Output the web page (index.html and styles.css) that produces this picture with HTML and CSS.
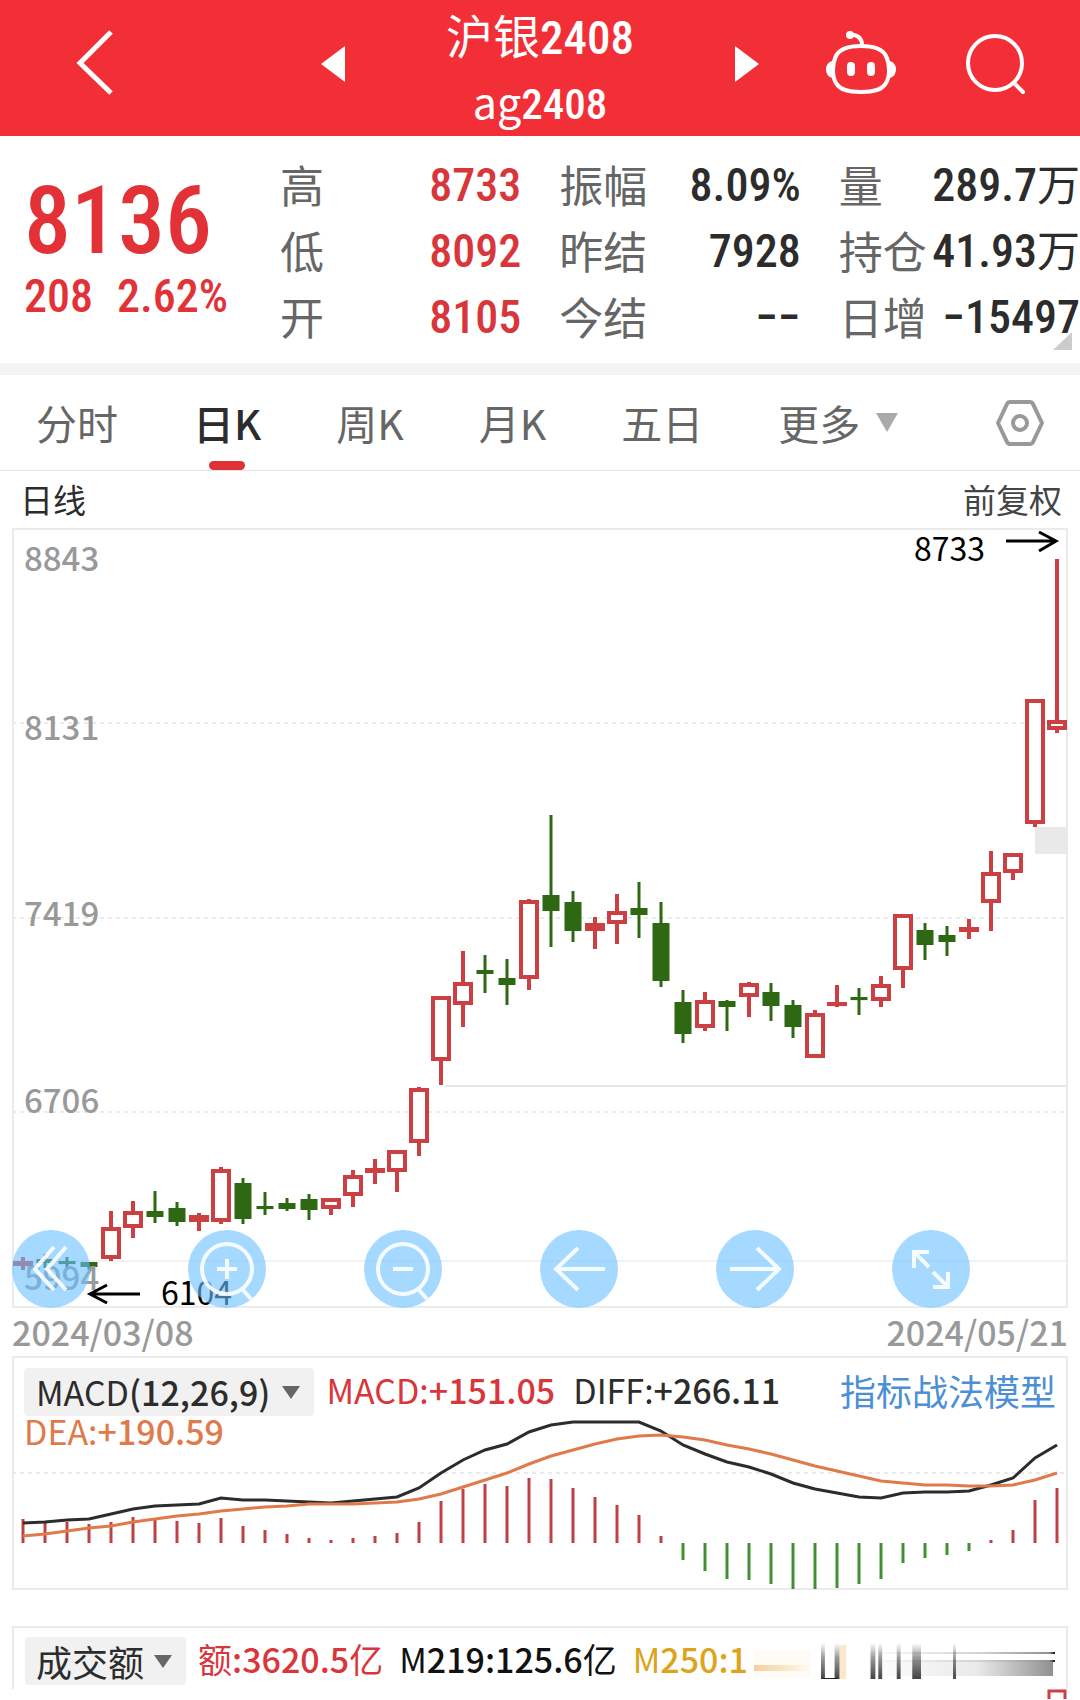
FILE: index.html
```html
<!DOCTYPE html>
<html lang="zh-CN">
<head>
<meta charset="utf-8">
<meta name="viewport" content="width=device-width, initial-scale=1">
<title>沪银2408</title>
<link rel="stylesheet" href="styles.css">
</head>
<body>
<header class="topbar">
  <div class="topbar-side">
    <button class="icon-button" type="button" aria-label="返回">
      <svg width="40" height="68" viewBox="0 0 40 68"><path d="M35 4 4 35 35 65" fill="none" stroke="#fff" stroke-width="5"/></svg>
    </button>
  </div>
  <div class="contract">
    <button class="icon-button" type="button" aria-label="上一个">
      <svg width="24" height="36" viewBox="0 0 24 36"><path d="M24 0V36L0 18Z" fill="#fff"/></svg>
    </button>
    <h1 class="contract-name"><span class="contract-title">沪银<span class="num">2408</span></span><span class="contract-code">ag<span class="num">2408</span></span></h1>
    <button class="icon-button" type="button" aria-label="下一个">
      <svg width="24" height="36" viewBox="0 0 24 36"><path d="M0 0V36L24 18Z" fill="#fff"/></svg>
    </button>
  </div>
  <div class="topbar-side topbar-tools">
    <button class="icon-button" type="button" aria-label="智能助手">
      <svg width="70" height="66" viewBox="0 0 70 66" fill="none" stroke="#fff" stroke-width="4" stroke-linecap="round">
        <path d="M35 16C47 16 56 18 60 26 64 34 64 46 60 53 56 60 48 62 35 62 22 62 14 60 10 53 6 46 6 34 10 26 14 18 23 16 35 16Z"/>
        <path d="M36 15C36 8 31 5 25 4.500"/>
        <circle cx="24" cy="5" r="4" fill="#fff" stroke="none"/>
        <path d="M6 31Q0 33 0 39.500T6 48ZM64 31Q70 33 70 39.500T64 48Z" fill="#fff" stroke="none"/>
        <path d="M25 36V42M45 36V42" stroke-width="8"/>
      </svg>
    </button>
    <button class="icon-button" type="button" aria-label="搜索">
      <svg width="62" height="62" viewBox="0 0 62 62" fill="none" stroke="#fff" stroke-width="4" stroke-linecap="round"><circle cx="30" cy="31" r="27"/><path d="M49 51 58 60"/></svg>
    </button>
  </div>
</header>

<main>
<section class="quote" aria-label="报价">
  <div class="price">
    <strong class="price-last num">8136</strong>
    <p class="price-change num"><span>208</span><span>2.62%</span></p>
  </div>
  <dl class="stats">
    <div class="stat"><dt>高</dt><dd class="num up">8733</dd></div>
    <div class="stat"><dt>振幅</dt><dd class="num">8.09%</dd></div>
    <div class="stat"><dt>量</dt><dd class="num">289.7<span class="unit">万</span></dd></div>
    <div class="stat"><dt>低</dt><dd class="num up">8092</dd></div>
    <div class="stat"><dt>昨结</dt><dd class="num">7928</dd></div>
    <div class="stat"><dt>持仓</dt><dd class="num">41.93<span class="unit">万</span></dd></div>
    <div class="stat"><dt>开</dt><dd class="num up">8105</dd></div>
    <div class="stat"><dt>今结</dt><dd class="num">−−</dd></div>
    <div class="stat"><dt>日增</dt><dd class="num">−15497</dd></div>
  </dl>
  <svg class="quote-more" width="19" height="18" viewBox="0 0 19 18"><path d="M19 0V18H0Z" fill="#ccc"/></svg>
</section>

<nav class="tabs" aria-label="周期">
  <button class="tab" type="button">分时</button>
  <button class="tab tab-active" type="button" aria-current="true">日K</button>
  <button class="tab" type="button">周K</button>
  <button class="tab" type="button">月K</button>
  <button class="tab" type="button">五日</button>
  <button class="tab tab-menu" type="button" aria-haspopup="true">更多<svg width="22" height="19" viewBox="0 0 22 19"><path d="M0 0H22L11 19Z" fill="#aaa"/></svg></button>
  <button class="icon-button tabs-settings" type="button" aria-label="设置">
    <svg width="48" height="46" viewBox="0 0 48 46" fill="none" stroke="#999" stroke-width="4" stroke-linejoin="round"><path d="M14 2H34Q36 2 37 4L46 23 37 42Q36 44 34 44H14Q12 44 11 42L2 23 11 4Q12 2 14 2Z"/><circle cx="24" cy="23" r="7"/></svg>
  </button>
</nav>

<section class="kline" aria-label="日线图">
  <div class="kline-head"><h2 class="kline-title">日线</h2><button class="adjust" type="button">前复权</button></div>
  <div class="chart">
    <svg class="plot" id="kline-plot" viewBox="0 528 1080 780">
      <rect class="frame" x="13" y="529" width="1054" height="778"/>
      <path class="grid" d="M12 723H1066M12 918H1066M12 1112H1066"/>
      <path class="level" d="M445 1086H1066"/>
      <path class="level level-thin" d="M14 1261H1066"/>
      <rect x="1035" y="827" width="32" height="27" fill="#e9e9e9"/>
      <g id="candles"></g>
      <g class="axis">
        <text x="24" y="571">8843</text><text x="24" y="740">8131</text><text x="24" y="926">7419</text><text x="24" y="1113">6706</text><text x="24" y="1290">5994</text>
      </g>
      <g class="marks">
        <text x="914" y="561">8733</text><text x="161" y="1305">6104</text>
        <path d="M1006 541H1056M1039 532 1056 541 1039 551M140 1294H90M107 1285 90 1294 107 1303"/>
      </g>
    </svg>
    <div class="chart-tools">
      <button class="tool" type="button" aria-label="最早"><svg viewBox="0 0 78 78"><path d="M42 17 23 39 42 60M54 17 35 39 54 60"/></svg></button>
      <button class="tool" type="button" aria-label="放大"><svg viewBox="0 0 78 78"><circle cx="39" cy="39" r="25"/><path d="M29 39H49M39 29V49M55 60 63 69"/></svg></button>
      <button class="tool" type="button" aria-label="缩小"><svg viewBox="0 0 78 78"><circle cx="39" cy="39" r="25"/><path d="M29 39H49M55 60 63 69"/></svg></button>
      <button class="tool" type="button" aria-label="左移"><svg viewBox="0 0 78 78"><path d="M65 39H16M38 18 16 39 38 60"/></svg></button>
      <button class="tool" type="button" aria-label="右移"><svg viewBox="0 0 78 78"><path d="M14 39H63M41 18 63 39 41 60"/></svg></button>
      <button class="tool" type="button" aria-label="全屏"><svg viewBox="0 0 78 78"><path d="M37 37 22 22M22 38V22H37M41 42 56 57M56 42V57H41"/></svg></button>
    </div>
  </div>
  <div class="dates"><time datetime="2024-03-08">2024/03/08</time><time datetime="2024-05-21">2024/05/21</time></div>
</section>

<section class="chart" aria-label="MACD">
  <svg class="plot" id="macd-plot" viewBox="0 1356 1080 234">
    <rect class="frame" x="13" y="1357" width="1054" height="232"/>
    <path class="grid" d="M12 1473H1066"/>
    <g id="macd-lines"></g>
  </svg>
  <div class="legend legend-over">
    <div class="legend-row">
      <button class="chip" type="button" aria-haspopup="true"><span>MACD<b>(12,26,9)</b></span><svg width="18" height="13" viewBox="0 0 18 13"><path d="M0 0H18L9 13Z" fill="#666"/></svg></button>
      <span class="legend-value up">MACD:<b>+151.05</b></span>
      <span class="legend-value">DIFF:<b>+266.11</b></span>
      <a class="legend-link" href="#model">指标战法模型</a>
    </div>
    <div class="legend-second dea">DEA:<b>+190.59</b></div>
  </div>
</section>

<section class="volume" aria-label="成交额">
  <div class="legend">
    <div class="legend-row">
      <button class="chip chip-cjk" type="button" aria-haspopup="true"><span>成交额</span><svg width="18" height="13" viewBox="0 0 18 13"><path d="M0 0H18L9 13Z" fill="#666"/></svg></button>
      <span class="legend-value up">额<b>:3620.5</b>亿</span>
      <span class="legend-value ink">M<b>219:125.6</b>亿</span>
      <span class="legend-value gold">M<b>250:1</b></span>
      <svg class="smear" viewBox="0 0 310 40" preserveAspectRatio="none" aria-hidden="true">
        <defs>
          <linearGradient id="fade-down" x1="0" y1="0" x2="0" y2="1"><stop offset="0" stop-color="#222" stop-opacity="0"/><stop offset=".4" stop-color="#222" stop-opacity=".45"/><stop offset="1" stop-color="#222" stop-opacity=".85"/></linearGradient>
          <linearGradient id="fade-right"><stop offset="0" stop-color="#222" stop-opacity="0"/><stop offset=".6" stop-color="#222" stop-opacity=".1"/><stop offset="1" stop-color="#222" stop-opacity=".5"/></linearGradient>
          <linearGradient id="fade-line"><stop offset="0" stop-color="#222" stop-opacity="0"/><stop offset=".6" stop-color="#222" stop-opacity=".2"/><stop offset=".97" stop-color="#222" stop-opacity=".5"/><stop offset="1" stop-color="#111"/></linearGradient>
          <linearGradient id="fade-gold"><stop offset="0" stop-color="#f0a050" stop-opacity=".5"/><stop offset="1" stop-color="#e5a72b" stop-opacity="0"/></linearGradient>
        </defs>
        <rect x="0" y="24" width="58" height="6" fill="url(#fade-gold)"/>
        <rect x="0" y="10" width="58" height="26" fill="#e5a72b" opacity=".05"/>
        <rect x="88" y="4" width="7" height="34" fill="#e5a72b" opacity=".25"/>
        <path d="M69 2H73V38H69ZM83 2H88V38H83ZM120 2H125V38H120ZM128 2H132V38H128ZM147 2H151V38H147ZM163 2H172V38H163ZM205 2H208V38H205Z" fill="url(#fade-down)"/>
        <path d="M70 37H87V38H70Z" fill="#222"/>
        <rect x="115" y="11" width="195" height="2" fill="url(#fade-line)"/>
        <rect x="115" y="19" width="195" height="2" fill="url(#fade-line)"/>
        <rect x="115" y="21" width="193" height="14" fill="url(#fade-right)"/>
      </svg>
    </div>
  </div>
  <svg class="volume-plot" viewBox="0 0 1080 10"><path d="M1049 12V2H1065V12" fill="none" stroke="#cc3f43" stroke-width="3"/></svg>
</section>
</main>
<script src="chart.js"></script>
</body>
</html>
```
FILE: styles.css
```css
* { box-sizing: border-box; }

body {
  margin: 0;
  overflow-x: hidden;
  background: #fff;
  color: #2c2c2c;
  font-family: "Noto Sans CJK SC", sans-serif;
}

h1, h2, p, dl, dd { margin: 0; font-weight: 400; }
button { border: 0; padding: 0; background: none; color: inherit; font: inherit; }
b { font-weight: 500; }
svg { display: block; flex: none; }

.num { font-family: "Roboto Condensed", Roboto, "Noto Sans CJK SC", sans-serif; font-weight: 500; }
.up { color: #d8363a; }

/* top bar */
.topbar {
  display: grid;
  grid-template-columns: 1fr 438px 1fr;
  align-items: center;
  height: 136px;
  background: #f22f37;
  color: #fff;
}
.topbar-side { display: flex; align-items: center; padding-left: 76px; padding-bottom: 12px; }
.topbar-tools { justify-content: flex-end; gap: 69px; padding: 0 53px 10px 0; }
.contract { display: flex; align-items: center; justify-content: space-between; }
.contract .icon-button { padding-bottom: 8px; }
.contract-name { display: flex; flex-direction: column; align-items: center; padding-bottom: 2px; }
.contract-title { font-size: 47px; line-height: 66px; }
.contract-code { font-size: 43px; line-height: 58px; }

/* quote */
.quote {
  position: relative;
  display: grid;
  grid-template-columns: 256px 1fr;
  padding: 16px 0 13px 24px;
}
.price { padding-top: 22px; color: #e23237; }
.price-last { display: block; font-size: 94px; line-height: 94px; }
.price-change { display: flex; gap: 24px; font-size: 46px; line-height: 56px; }
.stats { display: grid; grid-template-columns: repeat(3, 1fr); column-gap: 38px; }
.stat { display: flex; justify-content: space-between; height: 66px; line-height: 64px; white-space: nowrap; }
.stat dt { color: #666; font-size: 44px; }
.stat dd { font-size: 46px; line-height: 66px; }
.unit { font-family: "Noto Sans CJK SC", sans-serif; font-size: 43px; font-weight: 400; line-height: 1; }
.quote-more { position: absolute; right: 8px; bottom: 13px; }

/* period tabs */
.tabs {
  display: flex;
  align-items: center;
  gap: 75px;
  height: 108px;
  padding: 0 36px;
  border-top: 12px solid #f4f4f4;
  border-bottom: 1px solid #e4e4e4;
  color: #666;
  font-size: 41px;
}
.tab { position: relative; height: 95px; line-height: 93px; white-space: nowrap; }
.tab-active { color: #2c2c2c; font-weight: 500; }
.tab-active::after {
  content: "";
  position: absolute;
  left: calc(50% - 18px);
  bottom: 0;
  width: 36px;
  height: 9px;
  border-radius: 5px;
  background: #e03236;
}
.tab-menu { display: flex; align-items: center; gap: 16px; }
.tabs-settings { margin-left: auto; }

/* charts */
.kline-head { display: flex; justify-content: space-between; padding: 0 18px 0 20px; font-size: 33px; line-height: 57px; }
.kline-title { font-size: 33px; }
.adjust { color: #444; }
.chart { position: relative; }
.plot { width: 100%; height: auto; }
.frame { fill: none; stroke: #ebebeb; stroke-width: 2; }
.grid { stroke: #eaeaea; stroke-width: 2; stroke-dasharray: 4 4; }
.level { stroke: #e6e6e6; stroke-width: 2; }
.level-thin { stroke-width: 1; }
.axis { fill: #999; font-size: 33px; font-weight: 500; }
.marks { fill: #000; font-size: 32px; }
.marks path { fill: none; stroke: #000; stroke-width: 3; }
.candle-up { fill: #fff; stroke: #cc3f43; stroke-width: 4; }
.candle-down { fill: #2f6812; stroke: #2f6812; stroke-width: 3; }
.bar-up { stroke: #bd4144; stroke-width: 3; }
.bar-down { stroke: #439033; stroke-width: 3; }
.diff-line { fill: none; stroke: #2c2c2c; stroke-width: 3; }
.dea-line { fill: none; stroke: #e07a4a; stroke-width: 3; }

.chart-tools {
  position: absolute;
  right: 110px;
  bottom: 0;
  left: 12px;
  display: flex;
  justify-content: space-between;
}
.tool { width: 78px; height: 78px; border-radius: 50%; background: rgba(105, 192, 255, 0.6); }
.tool svg { fill: none; stroke: #fff; stroke-width: 4; opacity: 0.9; }
.dates { display: flex; justify-content: space-between; padding: 0 12px; color: #999; font-size: 34px; font-weight: 500; line-height: 48px; }

/* indicator legends */
.legend { padding: 11px 12px 0; font-size: 34px; }
.legend-over { position: absolute; top: 1px; right: 12px; left: 12px; }
.legend-row { display: flex; align-items: center; gap: 18px; height: 48px; white-space: nowrap; line-height: 40px; }
.legend-value { height: 44px; }
.chip { display: flex; align-items: center; gap: 12px; height: 48px; padding: 0 14px 0 12px; border-radius: 4px; background: #f1f1f1; line-height: 44px; }
.chip-cjk { gap: 10px; padding: 0 14px 0 11px; font-size: 36px; }
.chip + .legend-value { margin-left: -6px; }
.legend-link { height: 44px; margin-left: auto; color: #4d8fd6; font-size: 36px; text-decoration: none; }
.legend-second { line-height: 30px; }
.dea { color: #e07a4a; }
.ink { color: #111; }
.gold { color: #dca41c; }
.volume { height: 74px; margin-top: 36px; overflow: hidden; }
.volume .legend { margin: 0 12px; border: 2px solid #ebebeb; border-bottom: 0; padding: 9px 11px 4px; }
.volume .legend-value + .legend-value { margin-left: -2px; }
.smear { flex: 1; min-width: 0; height: 40px; margin-left: -12px; }
.volume-plot { width: 100%; }
```
FILE: chart.js
```js
const SVG = "http://www.w3.org/2000/svg";
const x = (i) => 23 + 22 * i;

function add(parent, name, attrs) {
  const node = document.createElementNS(SVG, name);
  for (const key in attrs) node.setAttribute(key, attrs[key]);
  parent.appendChild(node);
}

// direction, high, low, body top, body bottom
const candles = [
  ["up", 1257, 1270, 1261, 1266], ["down", 1254, 1268, 1259, 1263], ["down", 1257, 1269, 1261, 1264],
  ["down", 1262, 1270, 1262, 1267], ["up", 1211, 1261, 1227, 1259], ["up", 1201, 1238, 1211, 1228],
  ["down", 1191, 1223, 1211, 1217], ["down", 1202, 1226, 1208, 1222], ["up", 1213, 1231, 1215, 1222],
  ["up", 1167, 1224, 1169, 1222], ["down", 1178, 1224, 1183, 1219], ["down", 1192, 1215, 1206, 1209],
  ["down", 1198, 1211, 1203, 1209], ["down", 1194, 1220, 1199, 1210], ["up", 1198, 1215, 1198, 1209],
  ["up", 1170, 1207, 1175, 1196], ["up", 1159, 1184, 1168, 1173], ["up", 1150, 1192, 1150, 1172],
  ["up", 1087, 1156, 1088, 1143], ["up", 996, 1085, 996, 1061], ["up", 951, 1027, 982, 1005],
  ["down", 955, 993, 970, 974], ["down", 959, 1005, 978, 985], ["up", 899, 990, 900, 979],
  ["down", 815, 947, 895, 911], ["down", 891, 942, 902, 931], ["up", 917, 949, 923, 931],
  ["up", 894, 944, 911, 924], ["down", 882, 938, 908, 915], ["down", 902, 987, 923, 981],
  ["down", 990, 1043, 1002, 1034], ["up", 992, 1031, 1000, 1028], ["down", 1000, 1031, 1001, 1007],
  ["up", 982, 1017, 983, 997], ["down", 983, 1021, 992, 1006], ["down", 1000, 1038, 1005, 1027],
  ["up", 1010, 1058, 1013, 1058], ["up", 985, 1007, 1002, 1006], ["down", 988, 1015, 997, 1000],
  ["up", 976, 1007, 984, 1001], ["up", 914, 988, 914, 970], ["down", 923, 960, 930, 945],
  ["down", 926, 956, 935, 942], ["up", 919, 939, 927, 932], ["up", 851, 931, 872, 903],
  ["up", 853, 880, 853, 873], ["up", 699, 827, 699, 824], ["up", 559, 733, 720, 730]
];

const candleLayer = document.getElementById("candles");
candles.forEach(([dir, high, low, top, bottom], i) => {
  const stroke = dir === "up" ? 4 : 3;
  const half = dir === "up" ? 8 : 7;
  add(candleLayer, "path", { class: "candle-" + dir, d: `M${x(i)} ${high}V${low}` });
  add(candleLayer, "rect", {
    class: "candle-" + dir, x: x(i) - half, y: top + stroke / 2,
    width: half * 2, height: Math.max(bottom - top - stroke, 0.1)
  });
});

const zero = 1543;
const bars = [1519, 1521, 1522, 1524, 1522, 1517, 1520, 1521, 1523, 1518, 1526, 1530, 1534, 1538, 1540, 1538,
  1536, 1533, 1522, 1501, 1489, 1484, 1486, 1478, 1479, 1488, 1497, 1505, 1515, 1536, 1560, 1571, 1579, 1580,
  1584, 1589, 1589, 1588, 1584, 1579, 1563, 1558, 1555, 1551, 1540, 1530, 1500, 1488];
const diff = [1523, 1522, 1520, 1519, 1514, 1509, 1506, 1505, 1504, 1498, 1500, 1500, 1501, 1502, 1503, 1501,
  1499, 1497, 1488, 1473, 1460, 1450, 1444, 1432, 1425, 1422, 1422, 1422, 1422, 1431, 1445, 1454, 1462, 1467,
  1474, 1483, 1489, 1493, 1497, 1498, 1493, 1492, 1492, 1491, 1485, 1478, 1458, 1445];
const dea = [1536, 1534, 1531, 1528, 1526, 1522, 1519, 1516, 1514, 1511, 1509, 1507, 1506, 1504, 1504, 1504,
  1503, 1502, 1499, 1494, 1487, 1480, 1473, 1464, 1456, 1450, 1444, 1439, 1436, 1435, 1437, 1440, 1445, 1449,
  1454, 1460, 1466, 1471, 1476, 1481, 1483, 1485, 1485, 1486, 1486, 1485, 1480, 1473];

const macdLayer = document.getElementById("macd-lines");
const points = (values) => values.map((y, i) => `${x(i)},${y}`).join(" ");
bars.forEach((y, i) => add(macdLayer, "path", { class: y < zero ? "bar-up" : "bar-down", d: `M${x(i)} ${zero}V${y}` }));
add(macdLayer, "polyline", { class: "diff-line", points: points(diff) });
add(macdLayer, "polyline", { class: "dea-line", points: points(dea) });
```
